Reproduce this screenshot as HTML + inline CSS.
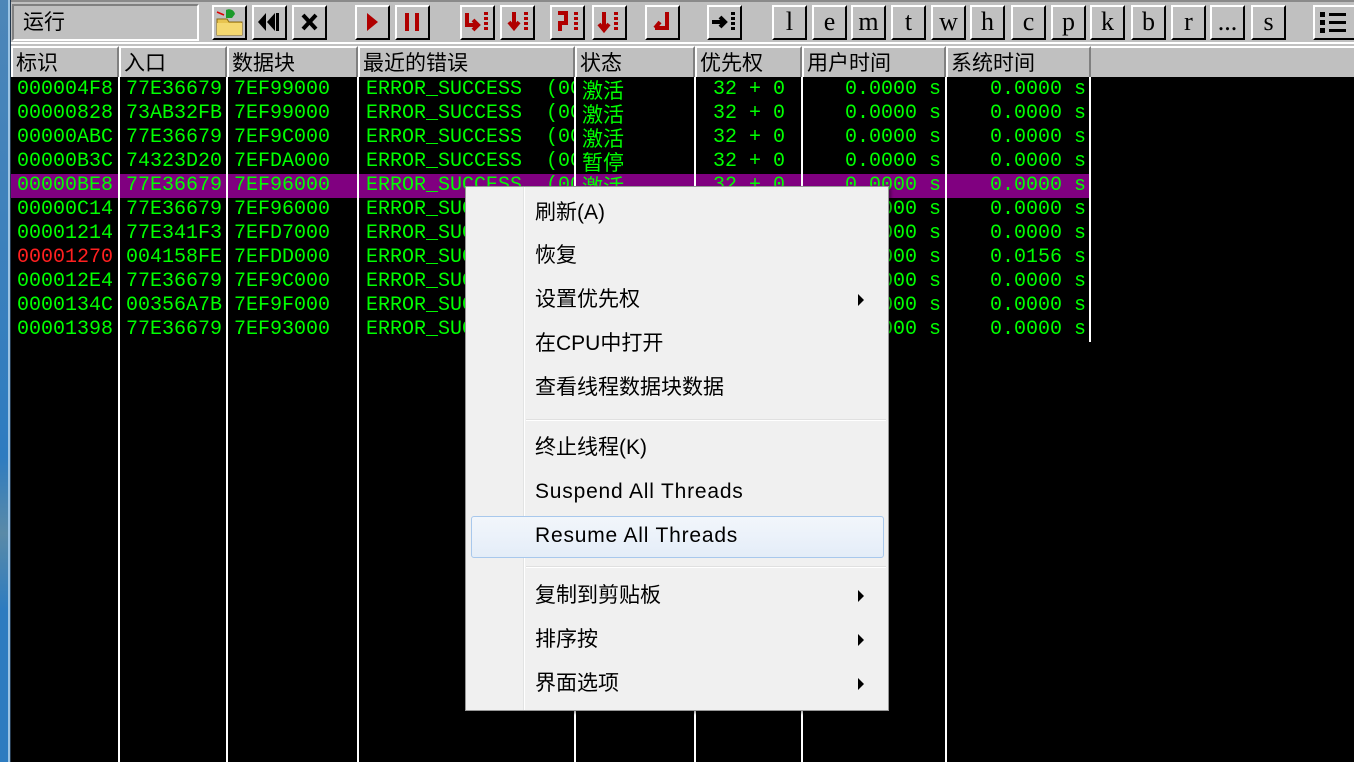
<!DOCTYPE html>
<html><head><meta charset="utf-8">
<style>
*{margin:0;padding:0;box-sizing:border-box}
body{width:1354px;height:762px;position:relative;overflow:hidden;background:#000;font-family:"Liberation Sans","Noto Sans CJK SC",sans-serif}
.a{position:absolute}
.tb{left:11px;top:0;width:1343px;height:44px;background:#c0c0c0;border-top:2px solid #8a8a8a;border-bottom:2px solid #fff}
.btn{position:absolute;top:5px;height:35px;width:35px;background:#c0c0c0;border-top:2px solid #fff;border-left:2px solid #fff;border-right:2px solid #000;border-bottom:2px solid #000;font-family:"Liberation Serif",serif;font-size:26px;text-align:center;line-height:29px;color:#000}
.hd{top:46px;height:31px;background:#c0c0c0;border-top:2px solid #fff;border-left:2px solid #fff;border-right:2px solid #808080;font-family:"WenQuanYi Zen Hei","Noto Sans CJK SC",sans-serif;font-size:21px;line-height:28px;padding-left:3px;color:#000}
.vl{top:77px;width:2px;height:685px;background:#fff}
.r{position:absolute;left:11px;width:1079px;height:24px;font-family:"Liberation Mono",monospace;font-size:20px;line-height:24px;color:#00ff00}
.r span{position:absolute;top:0;white-space:pre;overflow:hidden}
.c1{left:6px}.c2{left:115px}.c3{left:223px}.c4{left:355px;width:209px}
.c5{left:571px;font-family:"WenQuanYi Zen Hei","Noto Sans CJK SC",sans-serif;font-size:21px}
.c6{left:702px}.c7{left:834px}.c8{left:979px}
.menu{left:465px;top:186px;width:424px;height:525px;background:#f0f0f0;border:1px solid #979797;box-shadow:2px 2px 3px rgba(0,0,0,.4)}
.mi{position:absolute;left:69px;font-size:21px;color:#000;line-height:24px;font-family:"Liberation Sans","Noto Sans CJK SC",sans-serif}
.arr{position:absolute;left:392px;width:0;height:0;border-top:6px solid transparent;border-bottom:6px solid transparent;border-left:6px solid #000}
.sep{position:absolute;left:60px;width:360px;height:2px;border-top:1px solid #e0e0e0;border-bottom:1px solid #fff}
</style></head><body>
<div class="a" style="left:0;top:0;width:8px;height:762px;background:linear-gradient(#4d86b8,#2e7cc0 60%,#5a8aa8 70%,#2e7cc0 80%)"></div>
<div class="a" style="left:8px;top:0;width:2px;height:762px;background:#9cc4e4"></div>
<div class="a" style="left:10px;top:0;width:1px;height:762px;background:#23384d"></div>
<div class="a tb"></div>
<div class="a" style="left:12px;top:4px;width:187px;height:37px;border-top:2px solid #808080;border-left:2px solid #808080;border-right:2px solid #fff;border-bottom:2px solid #fff;background:#c0c0c0;font-family:'WenQuanYi Zen Hei','Noto Sans CJK SC',sans-serif;font-size:21px;line-height:31px;padding-left:9px">运行</div>
<div class="btn" style="left:212px"><svg width="31" height="31" viewBox="0 0 31 31"><path d="M3 12h10l2 3h13v13H3z" fill="#e8c450" stroke="#8a6a10"/><path d="M3 16h25v12H3z" fill="#f4d870"/><path d="M12 3c4-2 8 0 9 4l-3 4h-6z" fill="#1a9a2a"/><path d="M3 5l7 3" stroke="#d00" stroke-width="1.5"/></svg></div>
<div class="btn" style="left:252px"><svg width="31" height="31"><path d="M4 15l8-9v18zM13 15l8-9v18z" fill="#000"/><rect x="22" y="6" width="3" height="18"/></svg></div>
<div class="btn" style="left:292px"><svg width="31" height="31"><path d="M9 8l13 14M22 8L9 22" stroke="#000" stroke-width="4"/></svg></div>
<div class="btn" style="left:355px"><svg width="31" height="31"><path d="M10 6l11 9-11 9z" fill="#b00000"/></svg></div>
<div class="btn" style="left:395px"><svg width="31" height="31"><rect x="8" y="6" width="4" height="18" fill="#b00000"/><rect x="18" y="6" width="4" height="18" fill="#b00000"/></svg></div>
<div class="btn" style="left:460px"><svg width="31" height="31"><path d="M5 6v12h10M11 13l5 5-5 5" stroke="#b00000" stroke-width="4" fill="none"/><path d="M24 5v20" stroke="#b00000" stroke-width="4" stroke-dasharray="3 2"/></svg></div>
<div class="btn" style="left:500px"><svg width="31" height="31"><path d="M12 5v16M7 15l5 6 5-6" stroke="#b00000" stroke-width="4" fill="none"/><path d="M24 5v20" stroke="#b00000" stroke-width="4" stroke-dasharray="3 2"/></svg></div>
<div class="btn" style="left:550px"><svg width="31" height="31"><path d="M6 6h8v10H8v8" stroke="#b00000" stroke-width="4" fill="none"/><path d="M24 5v20" stroke="#b00000" stroke-width="4" stroke-dasharray="3 2"/></svg></div>
<div class="btn" style="left:592px"><svg width="31" height="31"><path d="M10 5v18M5 17l5 6 5-6" stroke="#b00000" stroke-width="4" fill="none"/><path d="M22 5v20" stroke="#b00000" stroke-width="4" stroke-dasharray="3 2"/></svg></div>
<div class="btn" style="left:645px"><svg width="31" height="31"><path d="M20 5v16h-12M13 15l-5 6" stroke="#b00000" stroke-width="4" fill="none"/></svg></div>
<div class="btn" style="left:707px"><svg width="31" height="31"><path d="M3 15h12M11 10l5 5-5 5" stroke="#000" stroke-width="4" fill="none"/><path d="M24 5v20" stroke="#000" stroke-width="4" stroke-dasharray="3 2"/></svg></div>
<div class="btn" style="left:772px">l</div>
<div class="btn" style="left:812px">e</div>
<div class="btn" style="left:851px">m</div>
<div class="btn" style="left:891px">t</div>
<div class="btn" style="left:931px">w</div>
<div class="btn" style="left:970px">h</div>
<div class="btn" style="left:1011px">c</div>
<div class="btn" style="left:1051px">p</div>
<div class="btn" style="left:1090px">k</div>
<div class="btn" style="left:1131px">b</div>
<div class="btn" style="left:1171px">r</div>
<div class="btn" style="left:1210px">...</div>
<div class="btn" style="left:1251px">s</div>
<div class="btn" style="left:1313px;width:45px"><svg width="40" height="31"><rect x="4" y="5" width="5" height="5"/><rect x="4" y="13" width="5" height="5"/><rect x="4" y="21" width="5" height="5"/><rect x="13" y="6" width="17" height="3"/><rect x="13" y="14" width="17" height="3"/><rect x="13" y="22" width="17" height="3"/></svg></div>

<div class="a" style="left:11px;top:44px;width:1343px;height:33px;background:#c0c0c0"></div>
<div class="a hd" style="left:11px;width:108px">标识</div>
<div class="a hd" style="left:119px;width:108px">入口</div>
<div class="a hd" style="left:227px;width:131px">数据块</div>
<div class="a hd" style="left:358px;width:217px">最近的错误</div>
<div class="a hd" style="left:575px;width:120px">状态</div>
<div class="a hd" style="left:695px;width:107px">优先权</div>
<div class="a hd" style="left:802px;width:144px">用户时间</div>
<div class="a hd" style="left:946px;width:145px">系统时间</div>
<div class="a" style="left:1091px;top:46px;width:263px;height:31px;background:#c0c0c0;border-top:2px solid #fff"></div>

<div class="a" style="left:11px;top:174px;width:1079px;height:24px;background:#800080"></div>

<div class="r" style="top:78px"><span class="c1">000004F8</span><span class="c2">77E36679</span><span class="c3">7EF99000</span><span class="c4">ERROR_SUCCESS  (00000000)</span><span class="c5">激活</span><span class="c6">32 + 0</span><span class="c7">0.0000 s</span><span class="c8">0.0000 s</span></div>
<div class="r" style="top:102px"><span class="c1">00000828</span><span class="c2">73AB32FB</span><span class="c3">7EF99000</span><span class="c4">ERROR_SUCCESS  (00000000)</span><span class="c5">激活</span><span class="c6">32 + 0</span><span class="c7">0.0000 s</span><span class="c8">0.0000 s</span></div>
<div class="r" style="top:126px"><span class="c1">00000ABC</span><span class="c2">77E36679</span><span class="c3">7EF9C000</span><span class="c4">ERROR_SUCCESS  (00000000)</span><span class="c5">激活</span><span class="c6">32 + 0</span><span class="c7">0.0000 s</span><span class="c8">0.0000 s</span></div>
<div class="r" style="top:150px"><span class="c1">00000B3C</span><span class="c2">74323D20</span><span class="c3">7EFDA000</span><span class="c4">ERROR_SUCCESS  (00000000)</span><span class="c5">暂停</span><span class="c6">32 + 0</span><span class="c7">0.0000 s</span><span class="c8">0.0000 s</span></div>
<div class="r" style="top:174px"><span class="c1">00000BE8</span><span class="c2">77E36679</span><span class="c3">7EF96000</span><span class="c4">ERROR_SUCCESS  (00000000)</span><span class="c5">激活</span><span class="c6">32 + 0</span><span class="c7">0.0000 s</span><span class="c8">0.0000 s</span></div>
<div class="r" style="top:198px"><span class="c1">00000C14</span><span class="c2">77E36679</span><span class="c3">7EF96000</span><span class="c4">ERROR_SUCCESS  (00000000)</span><span class="c7">0.0000 s</span><span class="c8">0.0000 s</span></div>
<div class="r" style="top:222px"><span class="c1">00001214</span><span class="c2">77E341F3</span><span class="c3">7EFD7000</span><span class="c4">ERROR_SUCCESS  (00000000)</span><span class="c7">0.0000 s</span><span class="c8">0.0000 s</span></div>
<div class="r" style="top:246px"><span class="c1" style="color:#ff2020">00001270</span><span class="c2">004158FE</span><span class="c3">7EFDD000</span><span class="c4">ERROR_SUCCESS  (00000000)</span><span class="c7">0.0000 s</span><span class="c8">0.0156 s</span></div>
<div class="r" style="top:270px"><span class="c1">000012E4</span><span class="c2">77E36679</span><span class="c3">7EF9C000</span><span class="c4">ERROR_SUCCESS  (00000000)</span><span class="c7">0.0000 s</span><span class="c8">0.0000 s</span></div>
<div class="r" style="top:294px"><span class="c1">0000134C</span><span class="c2">00356A7B</span><span class="c3">7EF9F000</span><span class="c4">ERROR_SUCCESS  (00000000)</span><span class="c7">0.0000 s</span><span class="c8">0.0000 s</span></div>
<div class="r" style="top:318px"><span class="c1">00001398</span><span class="c2">77E36679</span><span class="c3">7EF93000</span><span class="c4">ERROR_SUCCESS  (00000000)</span><span class="c7">0.0000 s</span><span class="c8">0.0000 s</span></div>

<div class="a vl" style="left:118px"></div>
<div class="a vl" style="left:226px"></div>
<div class="a vl" style="left:357px"></div>
<div class="a vl" style="left:574px"></div>
<div class="a vl" style="left:694px"></div>
<div class="a vl" style="left:801px"></div>
<div class="a vl" style="left:945px"></div>
<div class="a vl" style="left:1089px;height:265px"></div>

<div class="a menu">
<div class="a" style="left:57px;top:0;width:1px;height:523px;background:#e2e3e3"></div>
<div class="a" style="left:58px;top:0;width:1px;height:523px;background:#fff"></div>
<div class="mi" style="top:14px">刷新(A)</div>
<div class="mi" style="top:57px">恢复</div>
<div class="mi" style="top:101px">设置优先权</div><div class="arr" style="top:107px"></div>
<div class="mi" style="top:145px">在CPU中打开</div>
<div class="mi" style="top:189px">查看线程数据块数据</div>
<div class="sep" style="top:232px"></div>
<div class="mi" style="top:249px">终止线程(K)</div>
<div class="mi" style="top:293px;letter-spacing:0.8px">Suspend All Threads</div>
<div class="a" style="left:5px;top:329px;width:413px;height:42px;border:1px solid #a8c8ec;border-radius:3px;background:linear-gradient(#f2f6fb,#e4edf8)"></div>
<div class="mi" style="top:337px;letter-spacing:0.8px">Resume All Threads</div>
<div class="sep" style="top:379px"></div>
<div class="mi" style="top:397px">复制到剪贴板</div><div class="arr" style="top:403px"></div>
<div class="mi" style="top:441px">排序按</div><div class="arr" style="top:447px"></div>
<div class="mi" style="top:485px">界面选项</div><div class="arr" style="top:491px"></div>
</div>
</body></html>
